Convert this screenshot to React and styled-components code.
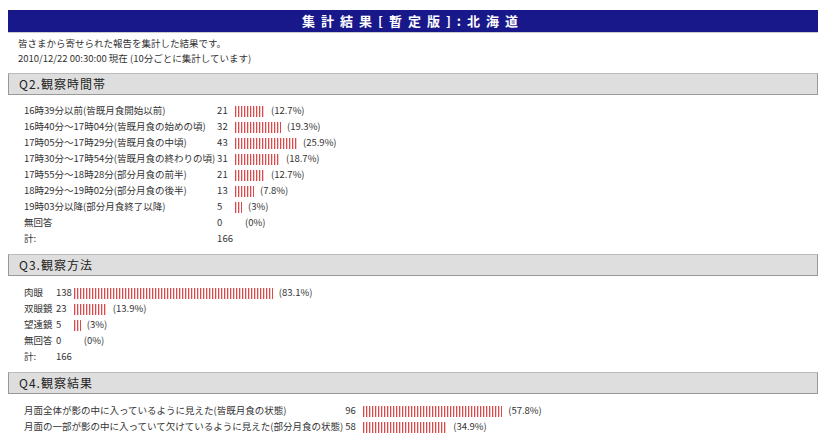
import React from "react";
import styled, { createGlobalStyle } from "styled-components";

const G = createGlobalStyle`
  body { margin: 0; background: #fff; font-family: "Noto Sans CJK JP", "Liberation Sans", sans-serif; font-size: 10px; color: #333; }
`;
const Page = styled.div`padding: 10px 8px 0 8px;`;
const Title = styled.div`
  background: #18188a; color: #fff; font-weight: bold; font-size: 13px; letter-spacing: 6px;
  text-align: center; height: 22px; line-height: 22px; border-bottom: 1px solid #ccc;
`;
const Intro = styled.div`padding: 3px 0 0 10px; line-height: 15px; font-size: 9.5px;`;
const SecHead = styled.div`
  margin-top: ${p => p.$mt}px; height: 20px; line-height: 20px; background: #dedede;
  border: 1px solid #999; border-top-color: #bbb; padding-left: 10px; font-size: 12px; color: #222;
  letter-spacing: 1px;
`;
const Table = styled.table`
  border-collapse: collapse; margin: ${p => p.$mt}px 0 0 16px; font-size: 9.5px; color: #333;
  td { padding: 0 2px 0 0; height: 16px; line-height: 14px; white-space: nowrap; }
`;
const LabelCell = styled.td`width: ${p => p.$w}px;`;
const Bar = styled.span`
  display: inline-block; vertical-align: middle; height: 11px; margin: 0 6px 0 ${p => p.$ml}px;
  background: repeating-linear-gradient(90deg, #d94a4a 0 1px, #f4caca 1px 2px, #fff 2px 3px);
`;

const Q2 = [
  ["16時39分以前(皆既月食開始以前)", 21, 12.7],
  ["16時40分〜17時04分(皆既月食の始めの頃)", 32, 19.3],
  ["17時05分〜17時29分(皆既月食の中頃)", 43, 25.9],
  ["17時30分〜17時54分(皆既月食の終わりの頃)", 31, 18.7],
  ["17時55分〜18時28分(部分月食の前半)", 21, 12.7],
  ["18時29分〜19時02分(部分月食の後半)", 13, 7.8],
  ["19時03分以降(部分月食終了以降)", 5, 3],
  ["無回答", 0, 0],
];
const Q3 = [["肉眼", 138, 83.1], ["双眼鏡", 23, 13.9], ["望遠鏡", 5, 3], ["無回答", 0, 0]];
const Q4 = [
  ["月面全体が影の中に入っているように見えた(皆既月食の状態)", 96, 57.8],
  ["月面の一部が影の中に入っていて欠けているように見えた(部分月食の状態)", 58, 34.9],
];

function Result({ rows, w, cw, total, mt }) {
  return (
    <Table $mt={mt}>
      <tbody>
        {rows.map(([l, n, p]) => (
          <tr key={l}>
            <LabelCell $w={w}>{l}</LabelCell>
            <td style={{ width: cw }}>{n}</td>
            <td>
              <Bar $ml={p ? 0 : 4} style={{ width: Math.round(p * 2.4) }} />({p}%)
            </td>
          </tr>
        ))}
        {total && (
          <tr><LabelCell $w={w}>計:</LabelCell><td>{total}</td><td /></tr>
        )}
      </tbody>
    </Table>
  );
}

export default function App() {
  return (
    <Page>
      <G />
      <Title>集計結果[暫定版]:北海道</Title>
      <Intro>皆さまから寄せられた報告を集計した結果です。<br />2010/12/22 00:30:00 現在 (10分ごとに集計しています)</Intro>
      <SecHead $mt={7}>Q2.観察時間帯</SecHead>
      <Result rows={Q2} w={190} cw={15} total={166} mt={7} />
      <SecHead $mt={8}>Q3.観察方法</SecHead>
      <Result rows={Q3} w={30} cw={14} total={166} mt={8} />
      <SecHead $mt={8}>Q4.観察結果</SecHead>
      <Result rows={Q4} w={312} cw={16} mt={8} />
    </Page>
  );
}
